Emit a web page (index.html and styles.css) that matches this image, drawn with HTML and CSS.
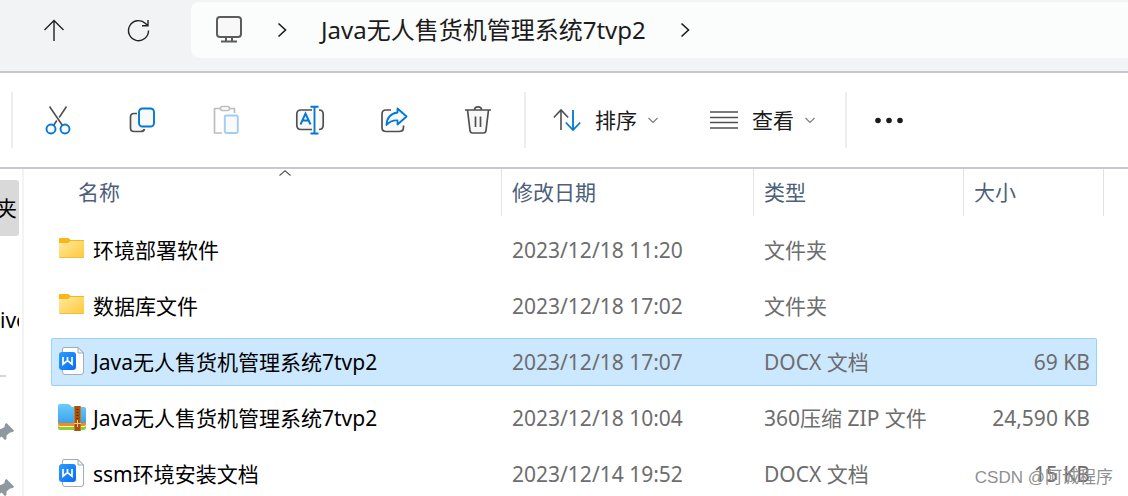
FILE: index.html
```html
<!DOCTYPE html>
<html lang="zh-CN">
<head>
<meta charset="utf-8">
<meta name="viewport" content="width=device-width, initial-scale=1">
<title>Java无人售货机管理系统7tvp2</title>
<link rel="stylesheet" href="styles.css">
</head>
<body>
<svg class="defs" aria-hidden="true">
  <defs>
    <linearGradient id="gFolder" x1="0" y1="0" x2="1" y2="1"><stop offset="0" stop-color="#ffe9a2"/><stop offset="1" stop-color="#ffc937"/></linearGradient>
    <linearGradient id="gDoc" x1="0" y1="0" x2="1" y2="1"><stop offset="0" stop-color="#2b9dff"/><stop offset="1" stop-color="#0a6cf5"/></linearGradient>
    <linearGradient id="gZip" x1="0" y1="0" x2="0" y2="1"><stop offset="0" stop-color="#6bcbfa"/><stop offset="1" stop-color="#3aa3ee"/></linearGradient>
  </defs>
  <symbol id="folder" viewBox="0 2 32 32">
    <path d="M3 7Q3 6 4 6H12.500L14.500 8H28V13H3z" fill="#fbb614"/>
    <path d="M3 11H12L14.500 9H28V25Q28 26 27 26H4Q3 26 3 25z" fill="url(#gFolder)"/>
    <path d="M3.500 25.500H27.500" stroke="#f3bd42" stroke-width="1"/>
  </symbol>
  <symbol id="doc" viewBox="0 1 32 32">
    <path d="M8 2.500H22L27.500 8V27Q27.500 29.500 25 29.500H9Q6.500 29.500 6.500 27V4Q6.500 2.500 8 2.500z" fill="#fff" stroke="#a3a9ba" stroke-width="1"/>
    <path d="M22 2.500V8H27.500z" fill="#f1f2f7" stroke="#a3a9ba" stroke-width="1"/>
    <rect x="3" y="7" width="17" height="18" rx="3" fill="url(#gDoc)"/>
    <path d="M7 12V19.200L11.500 15.500L16 19.200V12M11.500 12V16" fill="none" stroke="#fff" stroke-width="1.700"/>
  </symbol>
  <symbol id="zip" viewBox="0 1 32 32">
    <path d="M2 20H30V27Q30 29 28 29H4Q2 29 2 27z" fill="#8ed12c"/>
    <path d="M2 18H30V24Q30 26 28 26H4Q2 26 2 24z" fill="#fff4cf"/>
    <path d="M2 17H30V23Q30 25 28 25H4Q2 25 2 23z" fill="#f98a13"/>
    <path d="M2 5Q2 3 4 3H12Q13 3 14 4L16 6H28Q30 6 30 8V20Q30 22 28 22H4Q2 22 2 20z" fill="url(#gZip)"/>
    <rect x="18" y="5" width="7" height="25" rx="1" fill="#a5530f"/>
    <path d="M18.500 6V29M24.500 6V29" stroke="#c87826" stroke-width="1"/>
    <path d="M21.500 8V18" stroke="#5d2a05" stroke-width="2" stroke-dasharray="1 2"/>
    <path d="M18 22.500H25M21.500 19V26" stroke="#f3c97a" stroke-width="1" fill="none"/>
  </symbol>
  <symbol id="down" viewBox="0 0 10 10"><path d="M.5 3L5 7.500L9.500 3" fill="none" stroke="#7c7c7c" stroke-width="1.200"/></symbol>
  <symbol id="right" viewBox="0 0 10 16"><path d="M1.500 1.500L8.500 8L1.500 14.500" fill="none" stroke="#1b1b1b" stroke-width="1.600"/></symbol>
  <symbol id="pin" viewBox="0 0 14 18"><path d="M6.500 0L14 7.500L13 9L10 9.500L6.500 12.500V16L5 17L1.500 13.500L-4 18L0 12L-4 9L-3 6H1L4.500 4L5 1z" fill="#8e989e"/></symbol>
</svg>

<header class="navbar">
  <button class="nav-btn" type="button" aria-label="上移">
    <svg class="icon" viewBox="0 0 32 32"><path d="M16 6.500V27M6.500 16L16 6.500L25.500 16" fill="none" stroke="#222" stroke-width="1.400"/></svg>
  </button>
  <button class="nav-btn" type="button" aria-label="刷新">
    <svg class="icon" viewBox="0 0 32 32"><path d="M26.500 16.500A10 10 0 1 1 23.500 9.500L25.500 11.500M26 6V11.800H20" fill="none" stroke="#222" stroke-width="1.400"/></svg>
  </button>
  <nav class="address" aria-label="地址">
    <svg class="icon" viewBox="0 1 32 32"><rect x="4" y="4" width="24" height="20" rx="3" fill="#f8f8f8" stroke="#5c5c5c" stroke-width="2"/><path d="M13 24V28M19 24V28M8 28.500H24" fill="none" stroke="#5c5c5c" stroke-width="2"/></svg>
    <svg class="crumb-arrow" aria-hidden="true"><use href="#right"/></svg>
    <a class="crumb" href="#">Java无人售货机管理系统7tvp2</a>
    <svg class="crumb-arrow" aria-hidden="true"><use href="#right"/></svg>
  </nav>
</header>

<div class="toolbar" role="toolbar">
  <span class="sep"></span>
  <div class="tools">
    <button class="tool" type="button" aria-label="剪切"><svg class="icon" viewBox="0 0 32 32"><path d="M7.500 2.500L20.500 21.500M24.500 2.500L17.200 13.500M14.800 16.500L11.500 21.500" fill="none" stroke="#505050" stroke-width="1.600"/><g fill="#fff" stroke="#0078d4" stroke-width="1.900"><circle cx="9" cy="25" r="4.500"/><circle cx="23" cy="25" r="4.500"/></g></svg></button>
    <button class="tool" type="button" aria-label="复制"><svg class="icon" viewBox="0 0 32 32"><path d="M11 9.500H8Q4.500 9.500 4.500 13V24Q4.500 27.500 8 27.500H14.500Q18 27.500 18.500 25" fill="#f7f7f7" stroke="#505050" stroke-width="1.700"/><rect x="13" y="4.500" width="15" height="18" rx="3.500" fill="#f7f9fb" stroke="#0078d4" stroke-width="1.900"/></svg></button>
    <button class="tool" type="button" aria-label="粘贴" disabled><svg class="icon" viewBox="0 0 32 32"><path d="M11 4.500H4.500V29H12M20 4.500H24.500V9" fill="none" stroke="#bdbdbd" stroke-width="1.700" stroke-linejoin="round"/><rect x="10.500" y="2.500" width="9" height="4" rx="2" fill="#fff" stroke="#bdbdbd" stroke-width="1.600"/><rect x="14.800" y="11.500" width="13" height="17.500" rx="1.500" fill="#fafafa" stroke="#a0cdf0" stroke-width="1.900"/></svg></button>
    <button class="tool" type="button" aria-label="重命名"><svg class="icon" viewBox="0 0 32 32"><path d="M18 6H7Q2.800 6 2.800 10V21Q2.800 25.500 7 25.500H18M25 6Q29.200 6 29.200 10V21Q29.200 25.500 25 25.500" fill="#f8f8f8" stroke="#505050" stroke-width="1.700"/><path d="M6.500 20.500L11.500 9.500L16.500 20.500M8.300 16.500H14.700M20.500 3V29.500M16.500 2.800H24.500M16.500 29.500H24.500" fill="none" stroke="#0078d4" stroke-width="1.900"/></svg></button>
    <button class="tool" type="button" aria-label="共享"><svg class="icon" viewBox="0 0 32 32"><path d="M13 6H8Q4 6 4 10V23.500Q4 27.500 8 27.500H21Q25.500 27.500 25.500 23.500V21.500" fill="#fafafa" stroke="#505050" stroke-width="1.700"/><path d="M19.500 4.500L28.500 12.500L19.500 20.500V16.500Q13 16 8.500 21Q9 10 19.500 8.500z" fill="#f7fafc" stroke="#0078d4" stroke-width="1.800" stroke-linejoin="round"/></svg></button>
    <button class="tool" type="button" aria-label="删除"><svg class="icon" viewBox="0 0 32 32"><path d="M5.500 6L8 26.500Q8.300 29 10.500 29H21.500Q23.700 29 24 26.500L26.500 6" fill="#f8f8f8" stroke="#505050" stroke-width="1.700"/><path d="M3 6H29M12.500 6Q12.500 2.800 16 2.800T19.500 6M13.500 12.500V23M18.500 12.500V23" fill="none" stroke="#505050" stroke-width="1.700"/></svg></button>
  </div>
  <span class="sep"></span>
  <button class="menu" type="button">
    <svg class="menu-icon" viewBox="0 0 28 28"><path d="M8 24V4M.8 11.500L8 4L15.200 11.500" fill="none" stroke="#505050" stroke-width="1.600"/><path d="M20 4V24M12.800 16.500L20 24L27.200 16.500" fill="none" stroke="#0078d4" stroke-width="1.800"/></svg>
    <span class="menu-label">排序</span>
    <svg class="menu-arrow"><use href="#down"/></svg>
  </button>
  <button class="menu" type="button">
    <svg class="menu-icon" viewBox="0 0 28 28"><path d="M0 6H28M0 11.500H28M0 16.500H28M0 22H28" fill="none" stroke="#505050" stroke-width="1.600"/></svg>
    <span class="menu-label">查看</span>
    <svg class="menu-arrow"><use href="#down"/></svg>
  </button>
  <span class="sep sep-end"></span>
  <button class="tool" type="button" aria-label="更多"><svg class="icon" viewBox="0 0 32 32"><g fill="#1b1b1b"><circle cx="5" cy="16.500" r="2.800"/><circle cx="16" cy="16.500" r="2.800"/><circle cx="27" cy="16.500" r="2.800"/></g></svg></button>
</div>

<div class="content">
  <aside class="sidebar">
    <div class="side-item side-active">夹</div>
    <div class="side-item"></div>
    <div class="side-item side-start">ive</div>
    <div class="side-item side-start"><span class="side-rule"></span></div>
    <div class="side-item side-start"><svg class="pin"><use href="#pin"/></svg></div>
    <div class="side-item side-start"><svg class="pin"><use href="#pin"/></svg></div>
  </aside>
  <main class="files">
    <table class="list">
      <thead>
        <tr>
          <th scope="col">名称<svg class="sort-mark" viewBox="0 0 12 6"><path d="M.5 5.500L6 .8L11.500 5.500" fill="none" stroke="#555" stroke-width="1.100"/></svg></th>
          <th scope="col">修改日期</th>
          <th scope="col">类型</th>
          <th scope="col">大小</th>
        </tr>
      </thead>
      <tbody>
        <tr><td class="name"><svg class="file-icon"><use href="#folder"/></svg>环境部署软件</td><td>2023/12/18 11:20</td><td>文件夹</td><td class="size"></td></tr>
        <tr><td class="name"><svg class="file-icon"><use href="#folder"/></svg>数据库文件</td><td>2023/12/18 17:02</td><td>文件夹</td><td class="size"></td></tr>
        <tr class="selected"><td class="name"><svg class="file-icon"><use href="#doc"/></svg>Java无人售货机管理系统7tvp2</td><td>2023/12/18 17:07</td><td>DOCX 文档</td><td class="size">69 KB</td></tr>
        <tr><td class="name"><svg class="file-icon"><use href="#zip"/></svg>Java无人售货机管理系统7tvp2</td><td>2023/12/18 10:04</td><td>360压缩 ZIP 文件</td><td class="size">24,590 KB</td></tr>
        <tr><td class="name"><svg class="file-icon"><use href="#doc"/></svg>ssm环境安装文档</td><td>2023/12/14 19:52</td><td>DOCX 文档</td><td class="size">15 KB</td></tr>
      </tbody>
    </table>
  </main>
</div>
<div class="watermark">CSDN @阿诚程序</div>
</body>
</html>
```

FILE: styles.css
```css
* {
  box-sizing: border-box;
}

body {
  margin: 0;
  height: 100vh;
  overflow: hidden;
  position: relative;
  display: flex;
  flex-direction: column;
  background: #fff;
  color: #000;
  font-family: "Noto Sans", "Noto Sans CJK SC", sans-serif;
  font-size: 21px;
  line-height: 32px;
}

.defs {
  position: absolute;
  width: 0;
  height: 0;
}

svg {
  display: block;
  flex: none;
}

button {
  border: 0;
  padding: 0;
  background: none;
  color: inherit;
  font: inherit;
  display: flex;
  align-items: center;
  justify-content: center;
}

.icon {
  width: 32px;
  height: 32px;
}

/* Navigation row */
.navbar {
  flex: none;
  display: flex;
  align-items: flex-start;
  padding: 2px 0 13px 12px;
  background: #f2f3f5;
  border-bottom: 2px solid #c8c9ce;
}

.nav-btn {
  width: 84px;
  height: 56px;
}

.address {
  flex: 1;
  height: 56px;
  margin-left: 11px;
  padding-left: 22px;
  display: flex;
  align-items: center;
  background: #fbfcfc;
  border-radius: 8px 0 0 8px;
}

.crumb-arrow {
  width: 10px;
  height: 16px;
  margin: 0 32px;
}

.crumb {
  padding: 0 2px;
  color: #1b1b1b;
  font-size: 24px;
  text-decoration: none;
  white-space: nowrap;
}

/* Command bar */
.toolbar {
  flex: none;
  display: flex;
  align-items: center;
  padding: 19px 0 19px 11px;
  border-bottom: 2px solid #c8c9ce;
}

.sep {
  width: 2px;
  height: 56px;
  background: #ededed;
}

.sep-end {
  margin-left: 4px;
}

.tools {
  display: flex;
  padding: 0 4px 0 3px;
}

.tool {
  width: 84px;
  height: 56px;
}

.menu {
  height: 56px;
  padding: 0 26px;
  color: #1b1b1b;
}

.sep + .menu {
  padding-left: 27px;
}

.menu-icon {
  width: 28px;
  height: 28px;
}

.menu-label {
  margin: 0 11px 0 14px;
}

.menu-arrow {
  width: 10px;
  height: 10px;
}

/* Content */
.content {
  flex: 1;
  min-height: 0;
  display: flex;
}

.sidebar {
  width: 24px;
  flex: none;
  padding: 11px 3px 0 0;
  border-right: 2px solid #f3f3f3;
}

.side-item {
  height: 56px;
  display: flex;
  align-items: center;
  justify-content: flex-end;
  overflow: hidden;
  padding-right: 2px;
}

.side-start {
  justify-content: flex-start;
  padding-right: 0;
}

.side-active {
  background: #d9d9d9;
  border-radius: 0 3px 3px 0;
}

.side-rule {
  width: 6px;
  height: 2px;
  background: #d6d6d6;
}

.pin {
  width: 14px;
  height: 18px;
}

.files {
  flex: 1;
  min-width: 0;
  padding: 0 24px 0 27px;
}

.list,
.list thead,
.list tbody {
  display: flex;
  flex-direction: column;
}

.list thead {
  padding-left: 16px;
}

.list tbody {
  gap: 8px;
  padding: 10px 7px 0 0;
}

.list tr {
  display: grid;
  grid-template-columns: 1fr 252px 210px 141px;
}

.list tbody tr {
  height: 48px;
  grid-template-columns: 1fr 252px 210px 134px;
  border-radius: 2px;
}

.list tbody .selected {
  background: #cce8ff;
  box-shadow: inset 0 0 0 1px #99d1ff;
}

.list th {
  position: relative;
  height: 47px;
  padding: 7px 10px;
  border-left: 1px solid #e3e3e3;
  color: #4c607a;
  font-weight: 400;
  text-align: left;
}

.list th:first-child {
  border-left-color: transparent;
}

.list th:last-child {
  border-right: 1px solid #e3e3e3;
}

.sort-mark {
  position: absolute;
  top: 1px;
  left: 50%;
  width: 12px;
  height: 6px;
  transform: translateX(-50%);
}

.list td {
  display: flex;
  align-items: center;
  padding: 0 11px;
  color: #6d6d6d;
  white-space: nowrap;
}

.list .name {
  padding-left: 5px;
  gap: 5px;
  color: #000;
}

.list .size {
  justify-content: flex-end;
  padding-right: 7px;
}

.file-icon {
  width: 32px;
  height: 32px;
}

.watermark {
  position: absolute;
  right: 15px;
  bottom: 6px;
  color: #8f8f8f;
  font-family: "Liberation Sans", "Noto Sans CJK SC", sans-serif;
  font-size: 17px;
  line-height: 24px;
}
```
